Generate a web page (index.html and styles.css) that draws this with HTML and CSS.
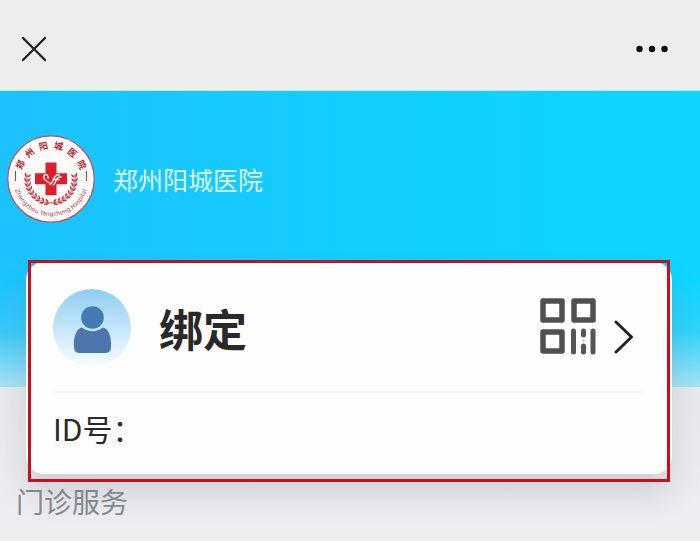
FILE: index.html
```html
<!DOCTYPE html>
<html lang="zh-CN">
<head>
<meta charset="utf-8">
<meta name="viewport" content="width=device-width, initial-scale=1">
<title>郑州阳城医院</title>
<link rel="stylesheet" href="styles.css">
</head>
<body>
<header class="topbar">
  <button class="icon-button" type="button" aria-label="关闭">
    <svg width="26" height="26" viewBox="0 0 26 26"><path d="M2 2 24 24M24 2 2 24" fill="none" stroke="#222" stroke-width="2.4" stroke-linecap="round"/></svg>
  </button>
  <button class="icon-button" type="button" aria-label="更多">
    <svg width="32" height="26" viewBox="0 0 32 26" fill="#111"><circle cx="3.5" cy="13" r="3.2"/><circle cx="16" cy="13" r="3.2"/><circle cx="28.5" cy="13" r="3.2"/></svg>
  </button>
</header>
<main class="page">
  <div class="hospital">
    <svg class="logo" viewBox="0 0 88 88" aria-hidden="true">
      <defs>
        <path id="arc" d="M6.5 48A37.8 37.8 0 0 0 81.5 48"/>
        <g id="leaf">
          <path d="M47 67.5Q43.5 69 40 67.2" fill="none" stroke="#c3353b" stroke-width=".6"/>
          <path d="M43 67.5Q40 67 39.5 64Q42.5 64.500 43 67.5ZM43.5 68.5Q41 71.200 38 70Q40 67.500 43.5 68.5Z" fill="#c3353b"/>
        </g>
        <g id="branch">
          <use href="#leaf" transform="rotate(3 44 44)"/>
          <use href="#leaf" transform="rotate(14 44 44)"/>
          <use href="#leaf" transform="rotate(25 44 44)"/>
          <use href="#leaf" transform="rotate(36 44 44)"/>
          <use href="#leaf" transform="rotate(47 44 44)"/>
          <use href="#leaf" transform="rotate(58 44 44)"/>
          <use href="#leaf" transform="rotate(69 44 44)"/>
          <use href="#leaf" transform="rotate(80 44 44)"/>
          <use href="#leaf" transform="rotate(91 44 44)"/>
        </g>
      </defs>
      <circle cx="44" cy="44" r="43.2" fill="#fffafa" stroke="#b9505f" stroke-width="1.2"/>
      <use href="#branch"/>
      <use href="#branch" transform="matrix(-1 0 0 1 88 0)"/>
      <path d="M38.5 27.5h11v10.8H60v11H49.500v11h-11v-11H28v-11h10.500z" fill="#dc1f2b"/>
      <path d="M43.500 48.500C39 46.500 35.500 43 37 40.500C38.800 38 42 40.500 41 43.500M43 49.500C46 48 46.200 44 48 41.500Q49.500 39.500 52.500 39.800M45.500 50.500C49 49 48.500 44.500 50.800 42.500Q52 41.500 54 42M46 44.500H52" fill="none" stroke="#fff" stroke-width="1.3" stroke-linecap="round"/>
      <path d="M8.500 36v10M79.500 36v10" stroke="#a8404a" stroke-width="1"/>
      <g class="logo-name">
        <text x="44" y="13.500" transform="rotate(-65 44 44)">郑</text>
        <text x="44" y="13.500" transform="rotate(-39 44 44)">州</text>
        <text x="44" y="13.500" transform="rotate(-13 44 44)">阳</text>
        <text x="44" y="13.500" transform="rotate(13 44 44)">城</text>
        <text x="44" y="13.500" transform="rotate(39 44 44)">医</text>
        <text x="44" y="13.500" transform="rotate(65 44 44)">院</text>
      </g>
      <text class="logo-latin"><textPath href="#arc" startOffset="50%">Zhengzhou Yangcheng Hospital</textPath></text>
    </svg>
    <h1 class="hospital-name">郑州阳城医院</h1>
  </div>
  <div class="highlight-wrap">
    <section class="card">
      <div class="profile">
        <svg class="avatar" viewBox="0 0 78 78" aria-hidden="true">
          <defs><linearGradient id="sky" x2="0" y2="1"><stop stop-color="#8fcdf2"/><stop offset=".55" stop-color="#c9e8fb"/><stop offset="1" stop-color="#fafdff"/></linearGradient></defs>
          <circle cx="39" cy="39" r="39" fill="url(#sky)"/>
          <circle cx="39.500" cy="28.500" r="11.300" fill="#457bb2"/>
          <path d="M29 38.500Q39.500 46 50 38.500C56 40 58.500 48 58 58Q58 64 52 64H27Q21 64 21 58C20.500 48 23 40 29 38.500Z" fill="#4d76ad"/>
        </svg>
        <h2 class="bind">绑定</h2>
        <button class="icon-button code" type="button" aria-label="二维码">
          <svg width="58" height="58" viewBox="0 0 58 58">
            <g fill="none" stroke="#505050" stroke-width="5.500" stroke-linejoin="round"><path d="M4 4h19v19H4zM35 4h19v19H35zM4 35h19v19H4z"/></g>
            <path d="M34.500 34v21M54 34v21M44.500 34v4M44.500 49v6" stroke="#555" stroke-width="5" stroke-linecap="round"/>
            <path d="M44.500 43.500h.1" stroke="#aaa" stroke-width="2" stroke-linecap="round"/>
          </svg>
        </button>
        <button class="icon-button next" type="button" aria-label="进入">
          <svg width="20" height="34" viewBox="0 0 20 34"><path d="M2 2 17.500 17 2 32" fill="none" stroke="#222" stroke-width="3" stroke-linecap="round" stroke-linejoin="round"/></svg>
        </button>
      </div>
      <p class="id-row">ID号：</p>
    </section>
    <div class="highlight"></div>
  </div>
  <h2 class="section-title">门诊服务</h2>
</main>
</body>
</html>
```

FILE: styles.css
```css
* {
  box-sizing: border-box;
}

body {
  margin: 0;
  background: #fff;
  color: #292929;
  font-family: "Noto Sans CJK SC", sans-serif;
}

h1,
h2,
p {
  margin: 0;
}

.icon-button {
  display: flex;
  padding: 0;
  border: 0;
  background: none;
}

.topbar {
  display: flex;
  align-items: center;
  justify-content: space-between;
  padding: 36px 32px 28px 21px;
  border-bottom: 1px solid #b5f0fa;
  background: #eeeeee;
}

.page {
  padding: 44px 30px 20px 28px;
  background:
    linear-gradient(to bottom, transparent 190px, #62d0f266 240px, #a5e2f5 296px) 0 0 / 100% 296px no-repeat,
    linear-gradient(to right, #1cc2fe, #12ceff 55%, #0cd5ff) 0 0 / 100% 296px no-repeat,
    linear-gradient(to bottom, #e7e8ec 300px, #eceef1);
}

.hospital {
  display: flex;
  align-items: center;
  gap: 18px;
  margin-left: -21px;
}

.logo {
  width: 88px;
  height: 88px;
}

.logo-name {
  fill: #ae2c35;
  font-size: 9px;
  font-weight: 700;
  text-anchor: middle;
}

.logo-latin {
  fill: #a94750;
  font-family: "DejaVu Sans", sans-serif;
  font-size: 6px;
  text-anchor: middle;
}

.hospital-name {
  color: #d9fbff;
  font-size: 25px;
  font-weight: 400;
  line-height: 36px;
}

.highlight-wrap {
  position: relative;
  margin-top: 39px;
}

.card {
  margin: 0 -2px;
  padding: 0 27px;
  border-radius: 18px;
  background: #fefefe;
  box-shadow: 0 20px 28px #70758038;
}

.profile {
  display: flex;
  align-items: center;
  padding: 27px 11px 24px 0;
  border-bottom: 2px solid #f7f7f7;
}

.avatar {
  width: 78px;
  height: 78px;
}

.bind {
  margin-left: 28px;
  font-size: 44px;
  font-weight: 700;
  line-height: 64px;
}

.code {
  margin: 0 0 4px auto;
}

.next {
  margin: 18px 0 0 17px;
}

.id-row {
  padding: 13px 0 24px;
  font-size: 30px;
  line-height: 44px;
}

.highlight {
  position: absolute;
  inset: -2px 0 -8px;
  border: 3px solid #c4101f;
  pointer-events: none;
}

.section-title {
  margin: 7px 0 0 -12px;
  color: #868a8f;
  font-size: 28px;
  font-weight: 400;
  line-height: 40px;
}
```
